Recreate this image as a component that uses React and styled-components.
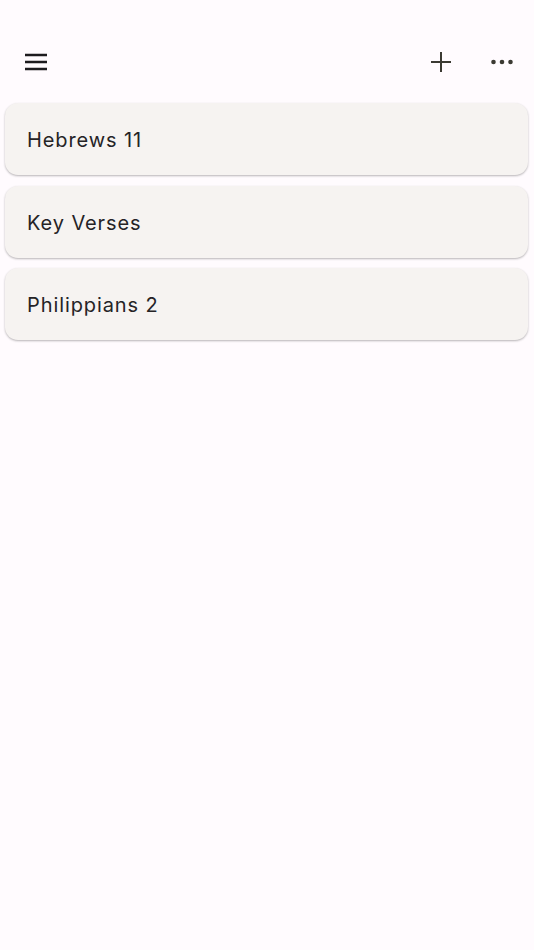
import React from "react";
import styled, { createGlobalStyle } from "styled-components";

const GlobalStyle = createGlobalStyle`
  html, body {
    margin: 0;
    padding: 0;
    background: #fffbfe;
  }
  body {
    font-family: Inter, Roboto, "Noto Sans", sans-serif;
    color: #1d1b1e;
  }
`;

const lists = ["Hebrews 11", "Key Verses", "Philippians 2"];

const Page = styled.div`
  min-height: 950px;
  background: #fffbfe;
  padding-top: 34px;
  box-sizing: border-box;
`;

const TopBar = styled.header`
  height: 56px;
  display: flex;
  align-items: center;
  padding: 0 10px 0 14px;
`;

const IconButton = styled.button`
  width: 44px;
  height: 44px;
  border: none;
  background: transparent;
  padding: 0;
  display: flex;
  align-items: center;
  justify-content: center;
  color: ${(p) => p.$color || "#1d1b1e"};
  margin-left: ${(p) => p.$gap || 0}px;
  cursor: pointer;
`;

const Spacer = styled.div`
  flex: 1;
`;

const List = styled.div`
  display: flex;
  flex-direction: column;
  gap: 10.5px;
  padding: 13px 6px 0 5px;
`;

const Card = styled.div`
  height: 72px;
  border-radius: 13px;
  background: #f6f3f1;
  box-shadow: 0 1px 2px rgba(0, 0, 0, 0.22), 0 1px 3px rgba(0, 0, 0, 0.08);
  display: flex;
  align-items: center;
  padding: 2px 0 0 22px;
  box-sizing: border-box;
`;

const Title = styled.span`
  font-size: 20px;
  letter-spacing: 0.9px;
  color: #252326;
`;

const MenuIcon = () => (
  <svg width="24" height="24" viewBox="0 0 24 24">
    <path d="M1 5h22M1 12h22M1 19h22" stroke="currentColor" strokeWidth="2.5" />
  </svg>
);

const PlusIcon = () => (
  <svg width="22" height="22" viewBox="0 0 22 22">
    <path d="M11 1v20M1 11h20" stroke="currentColor" strokeWidth="2" />
  </svg>
);

const DotsIcon = () => (
  <svg width="24" height="24" viewBox="0 0 24 24">
    <circle cx="3.5" cy="12" r="2.3" fill="currentColor" />
    <circle cx="12" cy="12" r="2.3" fill="currentColor" />
    <circle cx="20.5" cy="12" r="2.3" fill="currentColor" />
  </svg>
);

export default function App() {
  return (
    <Page>
      <GlobalStyle />
      <TopBar>
        <IconButton aria-label="menu">
          <MenuIcon />
        </IconButton>
        <Spacer />
        <IconButton aria-label="add" $color="#3b3a32">
          <PlusIcon />
        </IconButton>
        <IconButton aria-label="more" $color="#3b3a32" $gap={17}>
          <DotsIcon />
        </IconButton>
      </TopBar>
      <List>
        {lists.map((name) => (
          <Card key={name}>
            <Title>{name}</Title>
          </Card>
        ))}
      </List>
    </Page>
  );
}
